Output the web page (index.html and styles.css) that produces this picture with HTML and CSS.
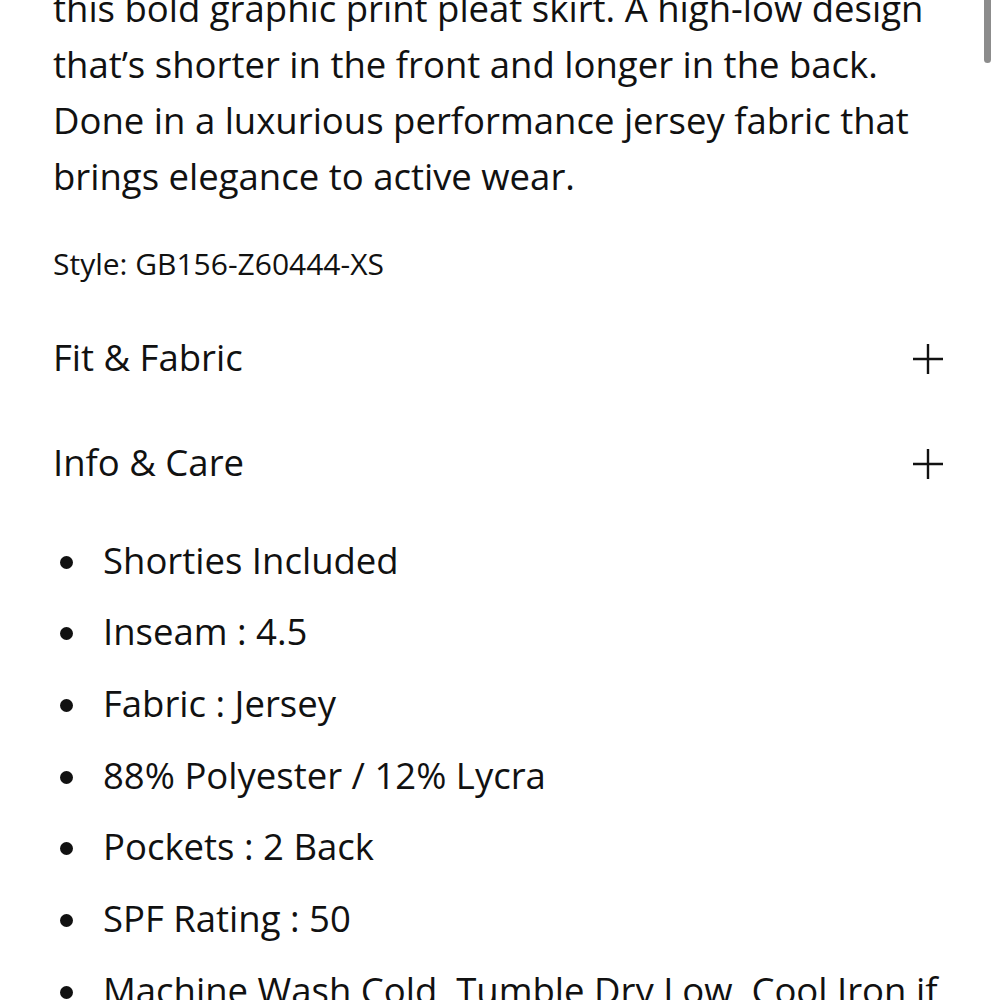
FILE: index.html
```html
<!DOCTYPE html>
<html lang="en">
<head>
<meta charset="utf-8">
<title>Product details</title>
<link rel="stylesheet" href="styles.css">
</head>
<body>
<div class="scroll-indicator"></div>
<main class="details">
  <p class="description">this bold graphic print pleat skirt. A high-low design that’s shorter in the front and longer in the back. Done in a luxurious performance jersey fabric that brings elegance to active wear.</p>
  <p class="style-code">Style: GB156-Z60444-XS</p>
  <div class="accordion">
    <div class="acc-row">
      <span class="acc-title">Fit &amp; Fabric</span>
      <svg class="plus" width="30" height="30" viewBox="0 0 30 30"><path d="M15 0V30M0 15H30" stroke="#111" stroke-width="2.4" fill="none"/></svg>
    </div>
    <div class="acc-row">
      <span class="acc-title">Info &amp; Care</span>
      <svg class="plus" width="30" height="30" viewBox="0 0 30 30"><path d="M15 0V30M0 15H30" stroke="#111" stroke-width="2.4" fill="none"/></svg>
    </div>
  </div>
  <ul class="features">
    <li>Shorties Included</li>
    <li>Inseam : 4.5</li>
    <li>Fabric : Jersey</li>
    <li>88% Polyester / 12% Lycra</li>
    <li>Pockets : 2 Back</li>
    <li>SPF Rating : 50</li>
    <li>Machine Wash Cold, Tumble Dry Low, Cool Iron if Needed</li>
  </ul>
</main>
</body>
</html>
```
FILE: styles.css
```css
html, body {
  margin: 0;
  padding: 0;
  overflow: hidden;
  background: #ffffff;
}
body {
  font-family: "Open Sans", "Noto Sans", sans-serif;
  color: #111111;
}
.scroll-indicator {
  position: fixed;
  top: -6px;
  left: 984px;
  width: 7px;
  height: 69px;
  border-radius: 4px;
  background: #8c8c8c;
}
.details {
  padding: 0 57px 0 53px;
}
.description {
  margin: -20px 0 0 0;
  font-size: 36.5px;
  line-height: 56px;
}
.style-code {
  margin: 40px 0 0 0;
  font-size: 30px;
  line-height: 40px;
}
.accordion {
  margin-top: 21px;
}
.acc-row {
  display: flex;
  align-items: center;
  justify-content: space-between;
  height: 105px;
}
.acc-title {
  font-size: 36.5px;
  line-height: 105px;
}
.plus {
  display: block;
  margin-top: 2px;
}
.features {
  list-style: none;
  margin: 16.5px 0 0 0;
  padding: 0;
}
.features li {
  display: flex;
  font-size: 36.5px;
  line-height: 56px;
  margin-bottom: 15.7px;
}
.features li::before {
  content: "";
  flex-shrink: 0;
  width: 13px;
  height: 13px;
  border-radius: 50%;
  background: #111111;
  margin: 24px 30px 0 7px;
}
```
